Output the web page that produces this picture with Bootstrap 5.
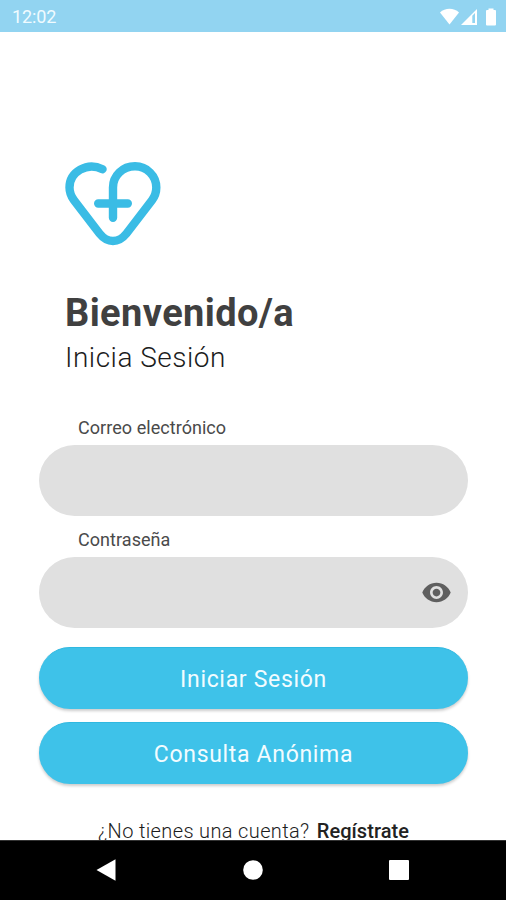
<!DOCTYPE html>
<html lang="es">
<head>
<meta charset="utf-8">
<meta name="viewport" content="width=device-width, initial-scale=1">
<title>Inicia Sesión</title>
<link href="https://cdn.jsdelivr.net/npm/bootstrap@5.3.0/dist/css/bootstrap.min.css" rel="stylesheet">
<style>
body { font-family: Roboto, sans-serif; color: #3c3c3c; }
.screen { height: 900px; width: 506px; }
.status-bar { height: 32px; background: #92d4f1; padding: 2px 8px 0 12px; }
.clock { font-size: 18px; line-height: 30px; color: #f0fbff; letter-spacing: -.1px; }
.content { padding: 129px 38px 0 39px; }
.intro { padding-left: 26px; }
.brand { display: block; margin-bottom: 43px; }
.title { font-size: 38px; line-height: 46px; font-weight: 700; color: #404040; letter-spacing: .4px; }
.subtitle { font-size: 28px; line-height: 34px; font-weight: 300; color: #1c1c1c; letter-spacing: .5px; margin-top: 5px; }
.login { margin-top: 41px; }
.field-label { font-size: 18px; line-height: 24px; padding: 0 0 5px 39px; color: #4a4a4a; letter-spacing: .05px; }
.field { height: 71px; background: #e0e0e0; padding-right: 16px; }
.field .form-control, .field .form-control:focus { background: transparent; box-shadow: none; height: 100%; padding-left: 38px; }
.second { margin-top: 12px; }
.action, .action:hover { height: 62px; background: #3ec2e9; color: #f2fcff; font-size: 23px; letter-spacing: .68px; padding: 10px 12px 6px; box-shadow: 0 2px 3px rgba(0,0,0,.2); border-top: 1px solid #2fb8e0; }
.first { margin-top: 19px; }
.next { margin-top: 13px; }
.signup { font-size: 20px; line-height: 26px; font-weight: 300; color: #1c1c1c; letter-spacing: .36px; margin-top: 34px; }
.signup a { color: #222; font-weight: 500; letter-spacing: .05px; margin-left: 2px; }
.nav-keys { height: 60px; background: #000; box-shadow: inset 0 1px #333; padding: 0 97px 0 96px; }
</style>
<script src="https://cdn.jsdelivr.net/npm/bootstrap@5.3.0/dist/js/bootstrap.bundle.min.js"></script>
</head>
<body class="bg-white overflow-hidden">
<div class="screen d-flex flex-column overflow-hidden">
  <header class="status-bar d-flex justify-content-between align-items-center flex-shrink-0">
    <span class="clock">12:02</span>
    <svg width="60" height="20" viewBox="438 6.500 60 20" fill="#fff" aria-hidden="true">
      <path d="M440 12.100C445 7.100 454 7.100 459 12.100L449.500 24Z"/>
      <path d="M461 24.500L477 8.500V24.500Z"/>
      <path d="M472.300 15.300L475 12.600V22.500H472.300Z" fill="#92d4f1"/>
      <path d="M486 10.500Q486 9.500 487 9.500H488.500V8H493.500V9.500H495Q496 9.500 496 10.500V24Q496 25 495 25H487Q486 25 486 24Z"/>
    </svg>
  </header>

  <main class="content flex-grow-1 overflow-hidden">
    <div class="intro">
      <svg class="brand" width="96" height="86" viewBox="65 161 96 86" fill="none" stroke="#3abce5" stroke-width="8.400" stroke-linecap="round" stroke-linejoin="round" aria-label="Logo">
        <path d="M102.500 169.200C87 161.500 69.500 172 69.500 187.500C69.500 192.500 71.200 196.500 74 200.300L99.500 233.500C107.500 243.500 118.500 243.500 126.500 233.500L152 200.300C154.800 196.500 156.300 192.500 156.300 187.500C156.300 176 147 166.300 135 166.300C122.500 166.300 113 176 113 187.500V217.800M98.200 203.500H127.800"/>
      </svg>
      <h1 class="title mb-0">Bienvenido/a</h1>
      <p class="subtitle mb-0">Inicia Sesión</p>
    </div>

    <form class="login">
      <label class="field-label d-block" for="mail">Correo electrónico</label>
      <div class="field rounded-pill d-flex align-items-center">
        <input id="mail" type="email" class="form-control border-0 rounded-pill">
      </div>
      <label class="field-label d-block second" for="pass">Contraseña</label>
      <div class="field rounded-pill d-flex align-items-center">
        <input id="pass" type="password" class="form-control border-0 rounded-pill">
        <svg class="flex-shrink-0" width="31" height="31" viewBox="0 0 24 24" fill="#5f5f5f" aria-hidden="true">
          <path d="M12 4.500C7 4.500 2.730 7.610 1 12c1.730 4.390 6 7.500 11 7.500s9.270-3.110 11-7.500c-1.730-4.390-6-7.500-11-7.500zM12 17c-2.760 0-5-2.240-5-5s2.240-5 5-5 5 2.240 5 5-2.240 5-5 5zm0-8c-1.660 0-3 1.340-3 3s1.340 3 3 3 3-1.340 3-3-1.340-3-3-3z"/>
        </svg>
      </div>
      <button type="button" class="action first btn rounded-pill w-100 border-bottom-0 border-start-0 border-end-0 d-block">Iniciar Sesión</button>
      <button type="button" class="action next btn rounded-pill w-100 border-bottom-0 border-start-0 border-end-0 d-block">Consulta Anónima</button>
    </form>
    <p class="signup text-center mb-0 text-nowrap">¿No tienes una cuenta? <a href="#" class="text-decoration-none">Regístrate</a></p>
  </main>

  <footer class="nav-keys d-flex justify-content-between align-items-center flex-shrink-0">
    <svg width="20" height="22" viewBox="0 0 20 22" fill="#fff" aria-label="Atrás"><path d="M.500 11L19.500 .300V21.700Z"/></svg>
    <svg width="20" height="20" viewBox="0 0 20 20" fill="#fff" aria-label="Inicio"><circle cx="10" cy="10" r="9.800"/></svg>
    <svg width="20" height="20" viewBox="0 0 20 20" fill="#fff" aria-label="Recientes"><rect width="20" height="20" rx="1"/></svg>
  </footer>
</div>
</body>
</html>
